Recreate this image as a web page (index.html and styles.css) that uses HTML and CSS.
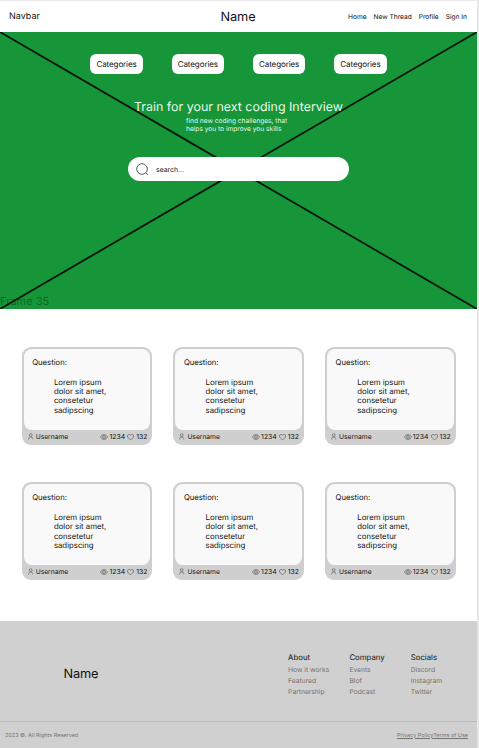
FILE: index.html
```html
<!DOCTYPE html>
<html lang="en">
<head>
<meta charset="utf-8">
<title>Coding Interview</title>
<link rel="stylesheet" href="styles.css">
</head>
<body>
<svg class="defs" aria-hidden="true">
  <symbol id="user" viewBox="0 0 6 8"><circle cx="3" cy="2.4" r="1.6"/><path d="M.6 7.5V6.6Q.7 4.6 3 4.6T5.4 6.6V7.5"/></symbol>
  <symbol id="eye" viewBox="0 0 8 6"><path d="M.4 3Q1.9.5 4 .5T7.6 3Q6.100 5.500 4 5.500T.4 3Z"/><circle cx="4" cy="3" r="1.400"/></symbol>
  <symbol id="heart" viewBox="0 0 7 6"><path d="M3.500 5.600C1.700 4.600.4 3.500.4 2.100C.4.4 2.500-.1 3.500 1.200C4.500-.1 6.600.4 6.600 2.100C6.600 3.500 5.300 4.600 3.500 5.600Z"/></symbol>
</svg>
<div class="page">
  <header class="navbar">
    <span class="nav-title">Navbar</span>
    <span class="brand">Name</span>
    <nav class="links"><a>Home</a><a>New Thread</a><a>Profile</a><a>Sign In</a></nav>
  </header>
  <section class="hero">
    <svg class="cross" viewBox="0 0 477 277" preserveAspectRatio="none"><path d="M0 0L477 277M477 0L0 277"/></svg>
    <div class="categories"><span>Categories</span><span>Categories</span><span>Categories</span><span>Categories</span></div>
    <h1>Train for your next coding Interview</h1>
    <p>find new coding challenges, that<br>helps you to improve you skills</p>
    <div class="search">
      <svg viewBox="0 0 13 13"><circle cx="6" cy="6" r="5.300"/><path d="M9.800 9.800L12 12"/></svg>
      <span>search...</span>
    </div>
    <span class="frame">Frame 35</span>
  </section>
  <main class="cards">
    <article class="card"><div class="body"><h2>Question:</h2><p>Lorem ipsum<br>dolor sit amet,<br>consetetur<br>sadipscing</p></div><div class="meta"><svg class="user"><use href="#user"/></svg><span class="name">Username</span><svg class="eye"><use href="#eye"/></svg><span class="views">1234</span><svg class="heart"><use href="#heart"/></svg><span class="likes">132</span></div></article>
    <article class="card"><div class="body"><h2>Question:</h2><p>Lorem ipsum<br>dolor sit amet,<br>consetetur<br>sadipscing</p></div><div class="meta"><svg class="user"><use href="#user"/></svg><span class="name">Username</span><svg class="eye"><use href="#eye"/></svg><span class="views">1234</span><svg class="heart"><use href="#heart"/></svg><span class="likes">132</span></div></article>
    <article class="card"><div class="body"><h2>Question:</h2><p>Lorem ipsum<br>dolor sit amet,<br>consetetur<br>sadipscing</p></div><div class="meta"><svg class="user"><use href="#user"/></svg><span class="name">Username</span><svg class="eye"><use href="#eye"/></svg><span class="views">1234</span><svg class="heart"><use href="#heart"/></svg><span class="likes">132</span></div></article>
    <article class="card"><div class="body"><h2>Question:</h2><p>Lorem ipsum<br>dolor sit amet,<br>consetetur<br>sadipscing</p></div><div class="meta"><svg class="user"><use href="#user"/></svg><span class="name">Username</span><svg class="eye"><use href="#eye"/></svg><span class="views">1234</span><svg class="heart"><use href="#heart"/></svg><span class="likes">132</span></div></article>
    <article class="card"><div class="body"><h2>Question:</h2><p>Lorem ipsum<br>dolor sit amet,<br>consetetur<br>sadipscing</p></div><div class="meta"><svg class="user"><use href="#user"/></svg><span class="name">Username</span><svg class="eye"><use href="#eye"/></svg><span class="views">1234</span><svg class="heart"><use href="#heart"/></svg><span class="likes">132</span></div></article>
    <article class="card"><div class="body"><h2>Question:</h2><p>Lorem ipsum<br>dolor sit amet,<br>consetetur<br>sadipscing</p></div><div class="meta"><svg class="user"><use href="#user"/></svg><span class="name">Username</span><svg class="eye"><use href="#eye"/></svg><span class="views">1234</span><svg class="heart"><use href="#heart"/></svg><span class="likes">132</span></div></article>
  </main>
  <footer>
    <div class="footer-main">
      <span class="footer-brand">Name</span>
      <div class="columns">
        <div><h3>About</h3><a>How it works</a><a>Featured</a><a>Partnership</a></div>
        <div><h3>Company</h3><a>Events</a><a>Blof</a><a>Podcast</a></div>
        <div><h3>Socials</h3><a>Discord</a><a>Instagram</a><a>Twitter</a></div>
      </div>
    </div>
    <div class="legal"><span>2023 ©. All Rights Reserved</span><span class="policy"><a>Privacy Policy</a><a>Terms of Use</a></span></div>
  </footer>
</div>
</body>
</html>
```
FILE: styles.css
```css
* { box-sizing: border-box; margin: 0; padding: 0; }
body { width: 479px; height: 748px; overflow: hidden; background: #e6e6e6; font-family: Inter, "Liberation Sans", sans-serif; color: #111; text-rendering: geometricPrecision; }
.defs { display: none; }
svg { fill: none; stroke: #333; stroke-width: .5; flex: none; }
.page { width: 477px; height: 748px; padding-top: 1px; display: flex; flex-direction: column; background: linear-gradient(#e9e9e9 1px, #fff 1px); }
h1, h2, h3 { font-weight: 400; }

.navbar { height: 31px; display: grid; grid-template-columns: 1fr auto 1fr; align-items: center; padding: 0 10px 0 9px; }
.nav-title { font-size: 9px; }
.brand { font-size: 12.800px; line-height: 16px; letter-spacing: -.15px; padding-top: 2px; }
.links { display: flex; justify-content: flex-end; gap: 7px; font-size: 6.600px; white-space: nowrap; }

.hero { position: relative; height: 277px; padding-top: 22px; background: #169639; display: flex; flex-direction: column; align-items: center; }
.cross { position: absolute; inset: 0; width: 477px; height: 277px; stroke: #071407; stroke-width: 1.8; }
.hero > :not(.cross):not(.frame) { position: relative; }
.categories { display: flex; gap: 29px; font-size: 8px; letter-spacing: -.1px; }
.categories span { width: 52.3px; height: 20px; border-radius: 6px; background: #fff; display: flex; align-items: center; justify-content: center; }
.hero h1 { margin-top: 25.500px; font-size: 12.450px; line-height: 16px; color: #e9f8ed; white-space: nowrap; }
.hero p { margin-top: 1.500px; font-size: 6.600px; line-height: 8px; color: #e2f5e7; width: 105px; white-space: nowrap; }
.search { margin-top: 24.300px; width: 221px; height: 24px; border-radius: 12px; background: #fff; display: flex; align-items: center; padding-left: 8px; gap: 7px; font-size: 6.900px; }
.search svg { width: 13px; height: 13px; stroke-width: .8; }
.frame { position: absolute; left: 0; bottom: 1px; font-size: 11px; line-height: 14px; color: rgba(0, 0, 0, .36); }

.cards { padding: 38px 0 0 21.700px; display: grid; grid-template-columns: repeat(3, 130.500px); grid-auto-rows: 97.500px; column-gap: 21.200px; row-gap: 37.700px; height: 312px; align-content: start; }
.card { background: #cfcfcf; border-radius: 9px; padding: 2px; }
.body { height: 80.500px; border-radius: 8px; background: #f9f9f9; padding: 8.500px 0 0 8.500px; }
.body h2 { font-size: 7.700px; line-height: 10px; }
.body p { margin: 10px 0 0 21.700px; font-size: 7.800px; line-height: 9.400px; white-space: nowrap; }
.meta { height: 13px; display: flex; align-items: center; padding: 1px 2.800px 0 4px; font-size: 6.700px; white-space: nowrap; }
.user { width: 5.500px; height: 7px; }
.eye { width: 8px; height: 6px; }
.heart { width: 7px; height: 6px; margin-left: 2px; }
.name { margin: 0 auto 0 2.500px; }
.views { margin-left: 1px; font-size: 6.900px; }
.likes { margin-left: 2px; font-size: 6.900px; }

footer { height: 127px; background: #d0d0d0; }
.footer-main { height: 101px; border-bottom: 1px solid #bbb; display: flex; justify-content: space-between; padding: 31px 5px 0 63.500px; }
.footer-brand { font-size: 12.800px; line-height: 16px; letter-spacing: -.15px; margin-top: 14.500px; }
.columns { display: grid; grid-template-columns: repeat(3, 61.300px); white-space: nowrap; font-size: 6.700px; color: #707070; }
.columns h3 { font-size: 7.800px; line-height: 10px; color: #111; }
.columns a { display: block; line-height: 10.800px; }
.columns h3 + a { margin: 2.600px 0 .7px; }
.legal { height: 26px; display: flex; align-items: center; justify-content: space-between; padding: 1px 9px 0 5px; font-size: 5.500px; color: #747474; }
.policy a { text-decoration: underline; }
```
